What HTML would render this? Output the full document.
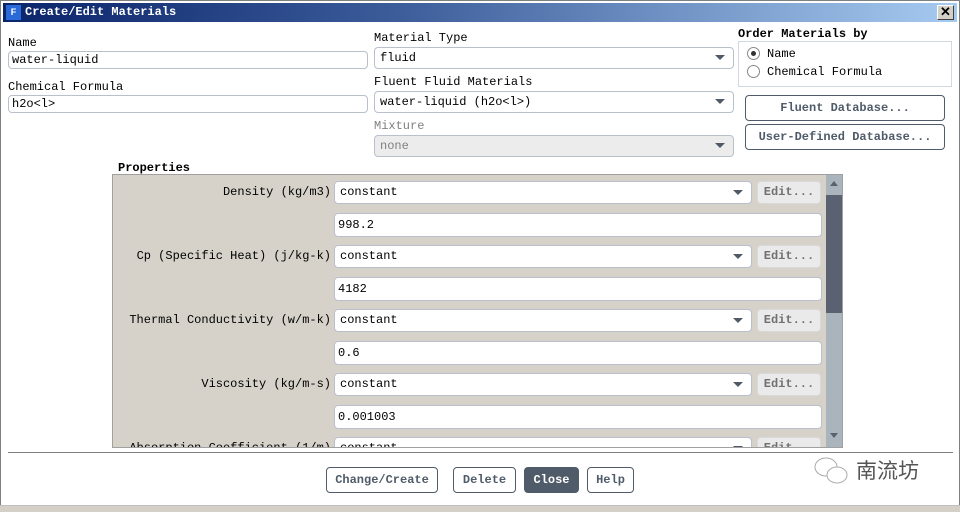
<!DOCTYPE html>
<html><head><style>
*{box-sizing:border-box;margin:0;padding:0}
body{width:960px;height:512px;overflow:hidden;background:#d4d0c8;font-family:"Liberation Mono",monospace;font-size:12px;color:#000;position:relative}
.a{position:absolute}
.win{left:0;top:0;width:960px;height:512px;border:1px solid #808080;background:#fff}
.title{left:3px;top:3px;width:954px;height:19px;background:linear-gradient(90deg,#0a246a,#3a5a98 40%,#a6caf0);color:#fff;font-weight:bold;font-size:12px;line-height:19px;padding-left:22px}
.lbl{white-space:nowrap;line-height:14px}
.b{font-weight:bold}
.in{background:#fff;border:1px solid #b8c0cc;border-radius:4px;padding-left:3px;line-height:16px;white-space:nowrap}
.sel{background:#fff;border:1px solid #b8c0cc;border-radius:4px;padding-left:5px;white-space:nowrap}
.sel:after{content:"";position:absolute;right:8px;top:50%;margin-top:-3px;border-left:5px solid transparent;border-right:5px solid transparent;border-top:5px solid #505a66}
.btn{border:1px solid #4f5b69;border-radius:4px;background:#fff;color:#4f5b69;font-weight:bold;text-align:center;white-space:nowrap}
.edit{background:#eaeaea;border:1px solid #d9d9d9;border-radius:4px;color:#707070;font-weight:bold;text-align:center;line-height:20px}
.rl{right:0;text-align:right;width:220px;line-height:22px;padding-right:3px}
</style></head><body>
<div class="a win"></div>
<div class="a title">Create/Edit Materials</div>
<div class="a" style="left:6px;top:5px;width:15px;height:15px;background:#2a6ad8;color:#fff;font-size:9px;font-weight:bold;text-align:center;line-height:15px;font-family:'Liberation Sans',sans-serif">F</div>
<div class="a" style="left:937px;top:5px;width:17px;height:15px;background:#d4d0c8;border:1px solid;border-color:#fff #404040 #404040 #fff;font-family:'Liberation Sans',sans-serif;font-size:13px;line-height:12px;text-align:center;font-weight:bold">✕</div>

<div class="a lbl" style="left:8px;top:36px">Name</div>
<div class="a in" style="left:8px;top:51px;width:360px;height:18px">water-liquid</div>
<div class="a lbl" style="left:8px;top:80px">Chemical Formula</div>
<div class="a in" style="left:8px;top:95px;width:360px;height:18px">h2o&lt;l&gt;</div>

<div class="a lbl" style="left:374px;top:31px">Material Type</div>
<div class="a sel" style="left:374px;top:47px;width:360px;height:22px;line-height:20px">fluid</div>
<div class="a lbl" style="left:374px;top:75px">Fluent Fluid Materials</div>
<div class="a sel" style="left:374px;top:91px;width:360px;height:22px;line-height:20px">water-liquid (h2o&lt;l&gt;)</div>
<div class="a lbl" style="left:374px;top:119px;color:#808080">Mixture</div>
<div class="a sel" style="left:374px;top:135px;width:360px;height:22px;line-height:20px;background:#ececec;color:#808080">none</div>

<div class="a lbl b" style="left:738px;top:27px">Order Materials by</div>
<div class="a" style="left:738px;top:41px;width:214px;height:46px;border:1px solid #d0d8e0"></div>
<div class="a" style="left:747px;top:47px;width:13px;height:13px;border:1px solid #888;border-radius:50%;background:#fff"><div style="margin:3px;width:5px;height:5px;border-radius:50%;background:#333"></div></div>
<div class="a lbl" style="left:767px;top:47px">Name</div>
<div class="a" style="left:747px;top:65px;width:13px;height:13px;border:1px solid #888;border-radius:50%;background:#fff"></div>
<div class="a lbl" style="left:767px;top:65px">Chemical Formula</div>
<div class="a btn" style="left:745px;top:95px;width:200px;height:26px;line-height:24px">Fluent Database...</div>
<div class="a btn" style="left:745px;top:124px;width:200px;height:26px;line-height:24px">User-Defined Database...</div>

<div class="a lbl b" style="left:118px;top:161px">Properties</div>
<div class="a" style="left:112px;top:174px;width:731px;height:274px;background:#d6d2ca;border:1px solid #a0a0a0;overflow:hidden">
 <div class="a" style="left:713px;top:0;width:16px;height:272px;background:#a9b4bc"></div>
 <div class="a" style="left:713px;top:20px;width:16px;height:118px;background:#5a6272"></div>
 <div class="a" style="left:717px;top:6px;border-left:4px solid transparent;border-right:4px solid transparent;border-bottom:5px solid #5a6272"></div>
 <div class="a" style="left:717px;top:258px;border-left:4px solid transparent;border-right:4px solid transparent;border-top:5px solid #5a6272"></div>
 <div class="a" style="left:0;top:6px;width:730px">
  <div class="a lbl rl" style="left:0;width:221px;top:0">Density (kg/m3)</div>
  <div class="a sel" style="left:221px;top:0;width:418px;height:23px;line-height:21px">constant</div>
  <div class="a edit" style="left:644px;top:0;width:64px;height:23px">Edit...</div>
  <div class="a in" style="left:221px;top:32px;width:488px;height:24px;line-height:22px">998.2</div>
 </div>
 <div class="a" style="left:0;top:70px;width:730px">
  <div class="a lbl rl" style="left:0;width:221px;top:0">Cp (Specific Heat) (j/kg-k)</div>
  <div class="a sel" style="left:221px;top:0;width:418px;height:23px;line-height:21px">constant</div>
  <div class="a edit" style="left:644px;top:0;width:64px;height:23px">Edit...</div>
  <div class="a in" style="left:221px;top:32px;width:488px;height:24px;line-height:22px">4182</div>
 </div>
 <div class="a" style="left:0;top:134px;width:730px">
  <div class="a lbl rl" style="left:0;width:221px;top:0">Thermal Conductivity (w/m-k)</div>
  <div class="a sel" style="left:221px;top:0;width:418px;height:23px;line-height:21px">constant</div>
  <div class="a edit" style="left:644px;top:0;width:64px;height:23px">Edit...</div>
  <div class="a in" style="left:221px;top:32px;width:488px;height:24px;line-height:22px">0.6</div>
 </div>
 <div class="a" style="left:0;top:198px;width:730px">
  <div class="a lbl rl" style="left:0;width:221px;top:0">Viscosity (kg/m-s)</div>
  <div class="a sel" style="left:221px;top:0;width:418px;height:23px;line-height:21px">constant</div>
  <div class="a edit" style="left:644px;top:0;width:64px;height:23px">Edit...</div>
  <div class="a in" style="left:221px;top:32px;width:488px;height:24px;line-height:22px">0.001003</div>
 </div>
 <div class="a" style="left:0;top:262px;width:730px">
  <div class="a lbl rl" style="left:0;width:221px;top:0">Absorption Coefficient (1/m)</div>
  <div class="a sel" style="left:221px;top:0;width:418px;height:23px;line-height:21px">constant</div>
  <div class="a edit" style="left:644px;top:0;width:64px;height:23px">Edit...</div>
 </div>
</div>

<div class="a" style="left:8px;top:452px;width:945px;height:1px;background:#808080"></div>
<div class="a btn" style="left:326px;top:467px;width:112px;height:26px;line-height:24px">Change/Create</div>
<div class="a btn" style="left:453px;top:467px;width:63px;height:26px;line-height:24px">Delete</div>
<div class="a btn" style="left:524px;top:467px;width:55px;height:26px;line-height:24px;background:#4f5b69;color:#fff">Close</div>
<div class="a btn" style="left:587px;top:467px;width:47px;height:26px;line-height:24px">Help</div>

<svg class="a" style="left:812px;top:453px" width="40" height="36" viewBox="0 0 40 36"><g fill="#fff" stroke="#aaa" stroke-width="1"><ellipse cx="14" cy="14" rx="11" ry="9"/><ellipse cx="25" cy="22" rx="10" ry="8"/></g></svg>
<div class="a" style="left:856px;top:456px;font-family:'Noto Sans CJK SC',sans-serif;font-size:21px;color:#555;line-height:28px">南流坊</div>
<div class="a" style="left:0;top:505px;width:960px;height:7px;background:#d4d0c8;border-top:1px solid #c0c0c0"></div>
</body></html>
